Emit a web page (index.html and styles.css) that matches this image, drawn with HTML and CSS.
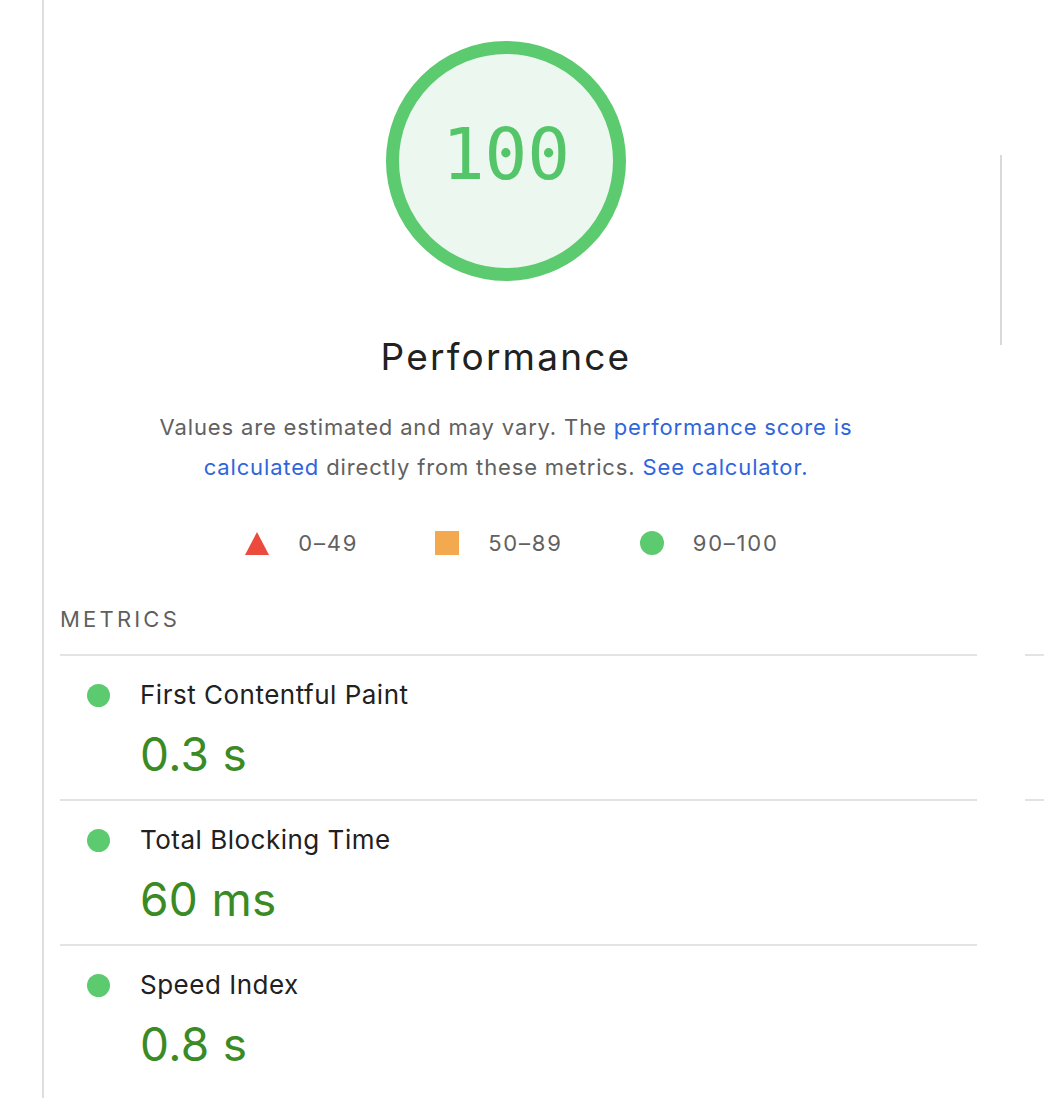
FILE: index.html
```html
<!DOCTYPE html>
<html lang="en">
<head>
    <meta charset="UTF-8">
    <meta name="viewport" content="width=device-width, initial-scale=1.0">
    <title>Performance - Report</title>
    <link rel="stylesheet" href="styles.css">
</head>
<body>
    <div class="report">
        <div class="summary">
            <div class="score-panel">
                <div class="gauge">
                    <svg width="240" height="240" viewBox="0 0 240 240">
                        <circle cx="120" cy="120" r="113.5" fill="#ecf8ef" stroke="#5cca6f" stroke-width="13"/>
                    </svg>
                    <span class="gauge-score">100</span>
                </div>
                <h2 class="category-title">Performance</h2>
                <p class="category-desc">
                    Values are estimated and may vary. The <a href="#">performance score is calculated</a>
                    directly from these metrics. <a href="#">See calculator.</a>
                </p>
                <div class="legend">
                    <span class="legend-item"><span class="icon-fail"></span>0–49</span>
                    <span class="legend-item"><span class="icon-average"></span>50–89</span>
                    <span class="legend-item"><span class="icon-pass"></span>90–100</span>
                </div>
            </div>
            <div class="vrule"></div>
        </div>

        <div class="metrics">
            <div class="metrics-header">Metrics</div>
            <div class="metrics-grid">
                <div class="metric">
                    <span class="dot"></span>
                    <span class="metric-title">First Contentful Paint</span>
                    <span class="metric-value">0.3 s</span>
                </div>
                <div class="metric">
                    <span class="dot"></span>
                    <span class="metric-title">Largest Contentful Paint</span>
                    <span class="metric-value">0.4 s</span>
                </div>
                <div class="metric">
                    <span class="dot"></span>
                    <span class="metric-title">Total Blocking Time</span>
                    <span class="metric-value">60 ms</span>
                </div>
                <div class="metric">
                    <span class="dot"></span>
                    <span class="metric-title">Cumulative Layout Shift</span>
                    <span class="metric-value">0</span>
                </div>
                <div class="metric">
                    <span class="dot"></span>
                    <span class="metric-title">Speed Index</span>
                    <span class="metric-value">0.8 s</span>
                </div>
            </div>
        </div>
    </div>
</body>
</html>
```

FILE: styles.css
```css
html, body {
    margin: 0;
    overflow: hidden;
}
body {
    font-family: Inter, "Noto Sans", sans-serif;
    background-color: #fff;
    color: #212121;
}
.report {
    margin-left: 42px;
    border-left: 2px solid #dedede;
    min-height: 1098px;
    width: 1900px;
}
.summary {
    display: flex;
}
.score-panel {
    width: 924px;
    text-align: center;
    padding-top: 41px;
}
.gauge {
    position: relative;
    width: 240px;
    height: 240px;
    margin: 0 auto;
}
.gauge svg {
    display: block;
}
.gauge-score {
    position: absolute;
    top: 0;
    left: 0;
    right: 0;
    line-height: 228px;
    font-family: "DejaVu Sans Mono", monospace;
    font-size: 71px;
    color: #55c569;
}
.category-title {
    margin: 54px 0 0;
    font-size: 37px;
    line-height: 44px;
    letter-spacing: 2.2px;
    font-weight: 400;
    color: #212121;
}
.category-desc {
    margin: 28px auto 0;
    width: 710px;
    font-size: 22px;
    line-height: 40px;
    letter-spacing: 0.85px;
    color: #616161;
}
.category-desc a {
    color: #2f65dc;
    text-decoration: none;
}
.legend {
    display: flex;
    justify-content: center;
    gap: 77px;
    margin-top: 41px;
    padding-left: 12px;
    font-size: 22px;
    line-height: 30px;
    letter-spacing: 1.8px;
    color: #616161;
}
.legend-item {
    display: flex;
    align-items: center;
    gap: 29px;
}
.icon-fail {
    width: 0;
    height: 0;
    border-left: 12px solid transparent;
    border-right: 12px solid transparent;
    border-bottom: 23px solid #eb4a3d;
}
.icon-average {
    width: 24px;
    height: 24px;
    background-color: #f3aa4e;
}
.icon-pass {
    width: 24px;
    height: 24px;
    border-radius: 50%;
    background-color: #5cca6f;
}
.vrule {
    width: 2px;
    height: 190px;
    margin: 155px 0 0 32px;
    background-color: #d9d9d9;
}
.metrics {
    padding-left: 16px;
    margin-top: 47px;
}
.metrics-header {
    font-size: 22px;
    line-height: 28px;
    letter-spacing: 3.2px;
    text-transform: uppercase;
    color: #5f5f5f;
    margin-bottom: 21px;
}
.metrics-grid {
    display: grid;
    grid-template-columns: 917px 917px;
    column-gap: 48px;
}
.metric {
    display: grid;
    grid-template-columns: 80px 1fr;
    align-items: center;
    border-top: 2px solid #e3e3e3;
    padding: 23px 0 17px;
}
.dot {
    width: 23px;
    height: 23px;
    margin-left: 27px;
    border-radius: 50%;
    background-color: #5cca6f;
}
.metric-title {
    font-size: 26px;
    line-height: 32px;
    letter-spacing: 0.5px;
    color: #212121;
}
.metric-value {
    grid-column: 2;
    margin-top: 15px;
    font-size: 46px;
    line-height: 56px;
    letter-spacing: 0.3px;
    color: #3a8a25;
}
```
